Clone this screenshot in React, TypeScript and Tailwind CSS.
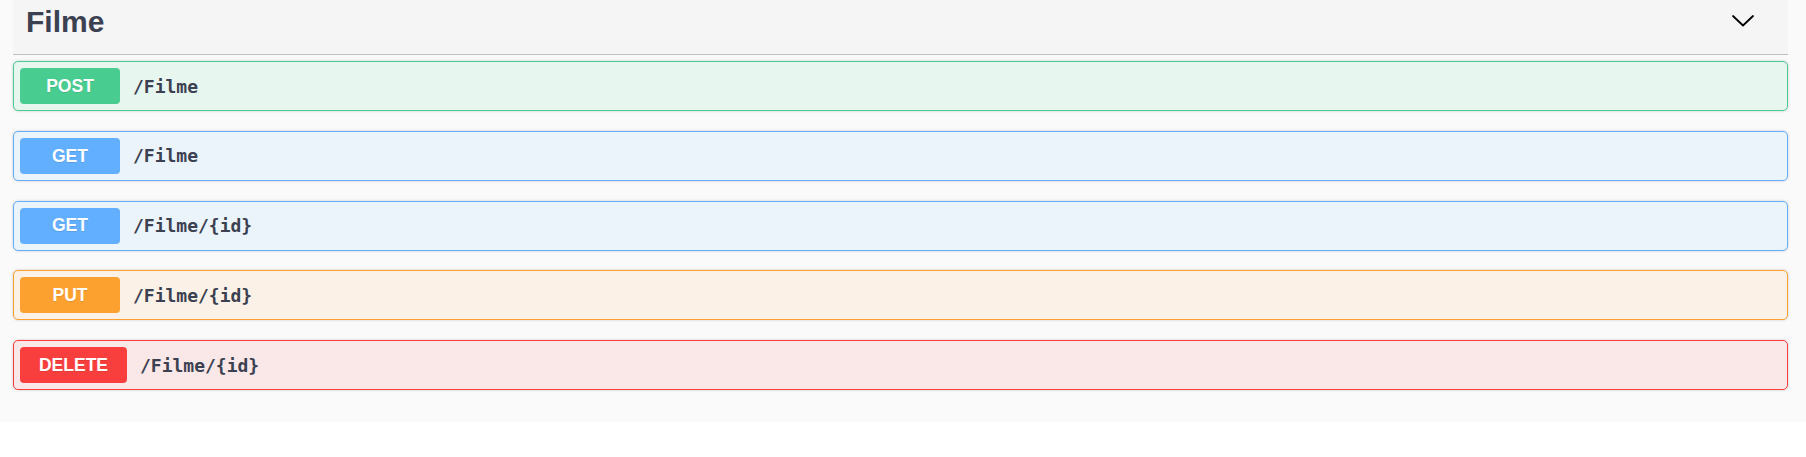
import React from 'react'

type Op = {
  method: string
  path: string
  box: string
  badge: string
  badgeW: string
}

const ops: Op[] = [
  { method: 'POST', path: '/Filme', box: 'border-[#49cc90] bg-[#e8f6f0]', badge: 'bg-[#49cc90]', badgeW: 'w-[100px]' },
  { method: 'GET', path: '/Filme', box: 'border-[#61affe] bg-[#ebf3fb]', badge: 'bg-[#61affe]', badgeW: 'w-[100px]' },
  { method: 'GET', path: '/Filme/{id}', box: 'border-[#61affe] bg-[#ebf3fb]', badge: 'bg-[#61affe]', badgeW: 'w-[100px]' },
  { method: 'PUT', path: '/Filme/{id}', box: 'border-[#fca130] bg-[#fbf1e6]', badge: 'bg-[#fca130]', badgeW: 'w-[100px]' },
  { method: 'DELETE', path: '/Filme/{id}', box: 'border-[#f93e3e] bg-[#fae7e7]', badge: 'bg-[#f93e3e]', badgeW: 'w-[107px]' },
]

function Chevron() {
  return (
    <svg width="24" height="14" viewBox="0 0 24 14" fill="none">
      <path d="M2 2 L12 11.5 L22 2" stroke="#000" strokeWidth="1.8" strokeLinecap="round" strokeLinejoin="round" />
    </svg>
  )
}

function OpBlock({ op }: { op: Op }) {
  return (
    <div
      className={`flex h-[50px] items-center rounded-[5px] border px-[6px] shadow-[0_0_3px_rgba(0,0,0,0.19)] ${op.box}`}
    >
      <span
        className={`flex h-[36px] items-center justify-center rounded-[4px] text-[17.5px] font-bold text-white [text-shadow:0_1px_0_rgba(0,0,0,0.1)] ${op.badge} ${op.badgeW}`}
        style={{ fontFamily: '"Liberation Sans", Arial, sans-serif' }}
      >
        {op.method}
      </span>
      <span
        className="ml-[13px] text-[18px] font-bold text-[#3b4151]"
        style={{ fontFamily: '"DejaVu Sans Mono", monospace' }}
      >
        {op.path}
      </span>
    </div>
  )
}

export default function App() {
  return (
    <div className="h-[457px] w-full bg-white">
      <div className="h-[422px] bg-[#fafafa] pl-[13px] pr-[18px]">
        <div className="flex h-[55px] items-start justify-between border-b border-[#bdbfc4] bg-[#f5f5f5] pl-[13px] pr-[33px] pt-[4px]">
          <h3
            className="text-[30px] font-bold leading-[36px] text-[#3b4151]"
            style={{ fontFamily: '"Liberation Sans", Arial, sans-serif' }}
          >
            Filme
          </h3>
          <div className="pt-[10px]">
            <Chevron />
          </div>
        </div>
        <div className="flex flex-col gap-[19.25px] pt-[6px]">
          {ops.map((op, i) => (
            <div key={i} className="h-[50.5px]">
              <OpBlock op={op} />
            </div>
          ))}
        </div>
      </div>
    </div>
  )
}
